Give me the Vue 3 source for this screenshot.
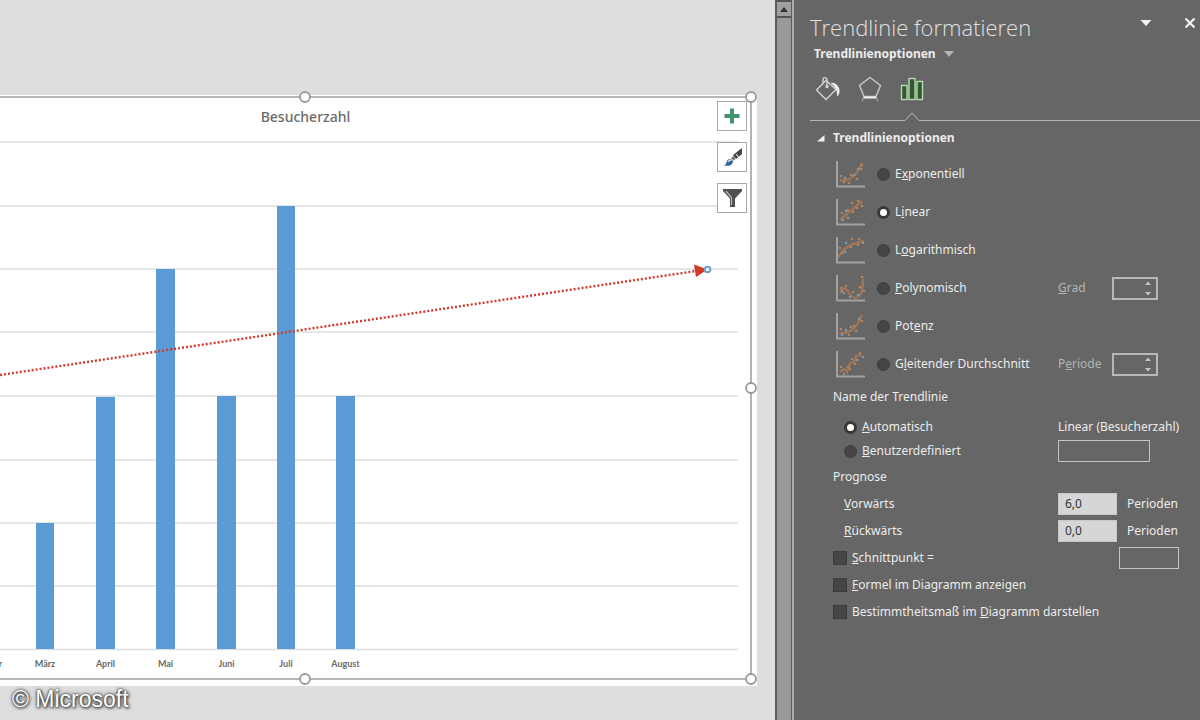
<script setup>
import { ref } from 'vue'

const gridLines = [142, 206, 269, 332, 396, 460, 523, 586]
const bars = [
  { x: 36, y: 523, w: 18, label: 'März' },
  { x: 96, y: 397, w: 19, label: 'April' },
  { x: 156, y: 269, w: 19, label: 'Mai' },
  { x: 217, y: 396, w: 19, label: 'Juni' },
  { x: 277, y: 206, w: 18, label: 'Juli' },
  { x: 336, y: 396, w: 19, label: 'August' },
]
const handles = [[305, 97], [751, 97], [751, 388], [305, 679], [751, 679]]

const types = [
  {
    id: 'exp', pre: 'E', key: 'x', post: 'ponentiell',
    curve: 'M4 20 C14 22 20 16 26 3',
    dots: [[5, 16], [9, 18], [15, 15], [21, 19], [22, 9], [26, 5], [13, 23], [18, 15], [8, 22], [25, 9]],
  },
  {
    id: 'lin', pre: 'L', key: 'i', post: 'near',
    curve: 'M4 22 L26 3',
    dots: [[6, 15], [10, 13], [16, 5], [22, 3], [12, 20], [17, 14], [26, 8], [7, 22], [21, 10], [12, 12]],
  },
  {
    id: 'log', pre: 'L', key: 'o', post: 'garithmisch',
    curve: 'M2 22 C7 12 14 8 28 5',
    dots: [[4, 12], [10, 7], [16, 3], [23, 3], [9, 16], [15, 11], [22, 9], [27, 7], [6, 17]],
  },
  {
    id: 'poly', pre: '', key: 'P', post: 'olynomisch', extra: { pre: '', key: 'G', post: 'rad' },
    curve: 'M4 19 C7 12 10 14 13 19 C18 27 27 27 27 5',
    dots: [[5, 14], [8, 19], [10, 12], [17, 18], [22, 21], [24, 13], [26, 3], [14, 23], [28, 17], [6, 17]],
  },
  {
    id: 'pot', pre: 'Pot', key: 'e', post: 'nz',
    curve: 'M3 21 C14 22 20 17 26 3',
    dots: [[5, 17], [10, 18], [15, 15], [20, 19], [23, 7], [26, 9], [13, 23], [6, 23], [18, 14]],
  },
  {
    id: 'avg', pre: 'G', key: 'l', post: 'eitender Durchschnitt', extra: { pre: 'P', key: 'e', post: 'riode' },
    curve: 'M4 22 L8 19 L11 22 L14 13 L18 12 L20 6 L26 5',
    dots: [[5, 17], [8, 24], [12, 17], [16, 9], [21, 10], [24, 3], [14, 19], [27, 7], [19, 14]],
  },
]
const selected = ref('lin')
const naming = ref('auto')
const periods = ref([
  { id: 'fwd', key: 'V', post: 'orwärts', value: '6,0' },
  { id: 'back', key: 'R', post: 'ückwärts', value: '0,0' },
])
</script>

<template>
  <div class="app">
    <main class="canvas">
      <section class="chart">
        <svg class="plot" viewBox="0 95 757 591" role="img" aria-label="Besucherzahl">
          <g stroke="#dedede" stroke-width="1.3">
            <line v-for="y in gridLines" :key="y" x1="0" :y1="y" x2="738" :y2="y" />
            <line x1="0" y1="649.5" x2="738" y2="649.5" />
          </g>
          <text class="chart-title" x="305.5" y="122" text-anchor="middle">Besucherzahl</text>
          <g v-for="b in bars" :key="b.label">
            <rect :x="b.x" :y="b.y" :width="b.w" :height="649 - b.y" fill="#5b9bd5" />
            <text class="month" :x="b.x + b.w / 2" y="667" text-anchor="middle">{{ b.label }}</text>
          </g>
          <text class="month" x="2" y="667" text-anchor="end">Februar</text>
          <line x1="0" y1="375" x2="696" y2="271" stroke="#d2392c" stroke-width="2.4" stroke-dasharray="2 2" />
          <path d="M694 264.500 L707.500 269.500 L696 277 Z" fill="#d03a20" />
          <circle cx="707.500" cy="269.500" r="2.800" fill="#fff" stroke="#6c9ccb" stroke-width="2" />
          <path d="M0 97 H751 V679 H0" fill="none" stroke="#a0a0a0" stroke-width="1.600" />
          <circle v-for="(h, i) in handles" :key="i" :cx="h[0]" :cy="h[1]" r="5" fill="#fff" stroke="#9a9a9a" stroke-width="1.800" />
        </svg>
        <div class="tools">
          <button type="button" aria-label="Diagrammelemente">
            <svg width="28" height="28" viewBox="0 0 28 28"><path d="M12 6.500h4v5.500h5.500v4H16v5.500h-4V16H6.500v-4H12z" fill="#44936f" /></svg>
          </button>
          <button type="button" aria-label="Diagrammformatvorlagen">
            <svg width="28" height="28" viewBox="0 0 28 28">
              <path d="M24 5v6l-6 5-3-4z" fill="#444" />
              <path d="M18 11l2.500 3" stroke="#fff" />
              <path d="M15.500 13l2 3-2 1.500-2.500-2.500z" fill="#777" />
              <path d="M6 22.500c3-1 2-4 4-6 2-1.500 5 0 5 2.500-1 3.500-5 4.500-9 3.500z" fill="#2f6497" />
              <path d="M10 19c1-2 2.500-2 3.500-1.500" fill="none" stroke="#c7dcf0" stroke-width="1.500" />
            </svg>
          </button>
          <button type="button" aria-label="Diagrammfilter">
            <svg width="28" height="28" viewBox="0 0 28 28">
              <path d="M5 5h19v2l-7 7.500V23h-5v-8.500L5 7z" fill="#505050" />
              <path d="M8 7l5.500 6.500V21" fill="none" stroke="#bbb" stroke-width="1.200" />
            </svg>
          </button>
        </div>
      </section>
      <p class="credit">© Microsoft</p>
    </main>

    <div class="scrollbar">
      <button type="button" aria-label="Nach oben">
        <svg width="8" height="5" viewBox="0 0 8 5"><path d="M4 0l4 5H0z" fill="#333" /></svg>
      </button>
    </div>

    <aside class="pane">
      <header class="pane-head">
        <h1>Trendlinie formatieren</h1>
        <button type="button" class="plain" aria-label="Bereichsoptionen">
          <svg width="12" height="6" viewBox="0 0 12 6"><path d="M0.500 0h11L6 6z" fill="#f2f2f2" /></svg>
        </button>
        <button type="button" class="plain close" aria-label="Schließen">
          <svg width="12" height="12" viewBox="0 0 12 12"><path d="M1.500 1.500l9 9M10.500 1.500l-9 9" stroke="#f2f2f2" stroke-width="2.200" /></svg>
        </button>
      </header>
      <button type="button" class="plain scope">
        Trendlinienoptionen
        <svg width="10" height="6" viewBox="0 0 10 6"><path d="M0 0h10L5 6z" fill="#b4b4b4" /></svg>
      </button>
      <nav class="tabs">
        <button type="button" class="plain" aria-label="Füllung und Linie">
          <svg width="26" height="26" viewBox="0 0 26 26" fill="none" stroke="#d2d2d2" stroke-width="1.400">
            <path d="M11 4.500L21 13.500 11 23.500 1.500 14z" />
            <path d="M8 8V3.500c0-2.500 4-2.500 4 0V10" />
            <circle cx="12" cy="10.500" r="1" fill="#d2d2d2" />
            <path d="M15.500 6.500c6 0 10 5 9 10-.5 2-1.500 3.500-2.500 4 .5-6-1.500-9-6.500-14z" fill="#ececec" stroke="none" />
          </svg>
        </button>
        <button type="button" class="plain" aria-label="Effekte">
          <svg width="26" height="26" viewBox="0 0 26 26" fill="none" stroke="#c4c4c4" stroke-width="1.500">
            <path d="M13 1.500L23.500 9.500 19 20.500H7L2.500 9.500z" />
            <path d="M6.500 21.500h13" stroke="#eee" stroke-width="2" />
            <path d="M6.500 22l-1.500 3.500M19.500 22l1.500 3.500" stroke="#999" />
          </svg>
        </button>
        <button type="button" class="plain" aria-label="Trendlinienoptionen">
          <svg width="26" height="26" viewBox="0 0 26 26" fill="#2f5a2b" stroke="#b9d8b3" stroke-width="1.400">
            <rect x="2.500" y="9.500" width="5.500" height="14" />
            <rect x="10" y="2.500" width="6" height="21" />
            <rect x="18" y="5.500" width="5.500" height="18" />
          </svg>
        </button>
      </nav>
      <div class="divider">
        <i class="lead"></i>
        <svg width="14" height="9" viewBox="0 0 14 9"><path d="M0 8.500L7 1l7 7.500" fill="none" stroke="#b5b5b5" /></svg>
        <i class="rest"></i>
      </div>

      <h2>
        <svg width="8" height="7" viewBox="0 0 8 7"><path d="M7.500 0v6.500H0z" fill="#f2f2f2" /></svg>
        Trendlinienoptionen
      </h2>

      <div v-for="t in types" :key="t.id" class="type-row">
        <svg width="29" height="28" viewBox="0 0 29 28" fill="none">
          <path :d="t.curve" stroke="#a0765a" stroke-width="2.400" />
          <g v-for="(d, i) in t.dots" :key="i">
            <circle :cx="d[0]" :cy="d[1]" r="1.300" :fill="i % 3 === 1 ? '#8497a3' : '#b5835c'" />
          </g>
          <path d="M1 1v25.500h28" stroke="#a2a2a2" stroke-width="2" />
        </svg>
        <label class="choice">
          <input v-model="selected" type="radio" name="type" :value="t.id" />
          <span>{{ t.pre }}<u>{{ t.key }}</u>{{ t.post }}</span>
        </label>
        <template v-if="t.extra">
          <label class="dim" :for="t.id + '-n'">{{ t.extra.pre }}<u>{{ t.extra.key }}</u>{{ t.extra.post }}</label>
          <span class="spinner">
            <input :id="t.id + '-n'" type="text" disabled />
            <svg width="6" height="15" viewBox="0 0 6 15"><path d="M0 4L3 0.500 6 4zM0 11L3 14.500 6 11z" fill="#c4c4c4" /></svg>
          </span>
        </template>
      </div>

      <h3>Name der Trendlinie</h3>
      <div class="names">
        <div class="name-row">
          <label class="choice">
            <input v-model="naming" type="radio" name="naming" value="auto" />
            <span><u>A</u>utomatisch</span>
          </label>
          <span>Linear (Besucherzahl)</span>
        </div>
        <div class="name-row">
          <label class="choice">
            <input v-model="naming" type="radio" name="naming" value="custom" />
            <span><u>B</u>enutzerdefiniert</span>
          </label>
          <input class="outline" type="text" aria-label="Benutzerdefinierter Name" />
        </div>
      </div>

      <h3>Prognose</h3>
      <div v-for="p in periods" :key="p.id" class="period-row">
        <label :for="p.id"><u>{{ p.key }}</u>{{ p.post }}</label>
        <input :id="p.id" v-model="p.value" type="text" />
        <span>Perioden</span>
      </div>

      <div class="check-row">
        <label class="check"><input type="checkbox" /><span><u>S</u>chnittpunkt =</span></label>
        <input class="outline intercept" type="text" aria-label="Schnittpunkt" />
      </div>
      <div class="check-row">
        <label class="check"><input type="checkbox" /><span><u>F</u>ormel im Diagramm anzeigen</span></label>
      </div>
      <div class="check-row">
        <label class="check"><input type="checkbox" /><span>Bestimmtheitsmaß im <u>D</u>iagramm darstellen</span></label>
      </div>
    </aside>
  </div>
</template>

<style>
body {
  margin: 0;
  background: #dedede;
}
</style>

<style scoped>
* {
  box-sizing: border-box;
}
.app {
  display: flex;
  min-height: 100vh;
  font: 12px/18px "Noto Sans", "Open Sans", sans-serif;
  color: #ececec;
}
svg {
  display: block;
  flex: none;
}
button,
input {
  font: inherit;
  color: inherit;
  margin: 0;
}
button {
  display: flex;
  align-items: center;
  justify-content: center;
  padding: 0;
}
.plain {
  border: 0;
  background: none;
}
.canvas {
  flex: 1;
  min-width: 0;
  padding: 95px 18px 0 0;
  background: #dedede;
}
.chart {
  position: relative;
  background: #fff;
}
.plot {
  width: 100%;
  height: auto;
  overflow: visible;
}
.chart-title {
  font: 500 14px "Noto Sans", sans-serif;
  fill: #6a6a6a;
}
.month {
  font: bold 9px Lato, sans-serif;
  fill: #6a6a6a;
}
.tools {
  position: absolute;
  top: 6px;
  right: 10px;
  display: grid;
  gap: 11px;
}
.tools button {
  width: 30px;
  height: 30px;
  border: 1px solid #a8a8a8;
  background: #fff;
}
.credit {
  margin: 0 0 0 12px;
  font: 23px/26px "Liberation Sans", Arial, sans-serif;
  color: #fff;
  text-shadow: 0 0 2px #333, 1px 1px 3px #333, 0 0 4px #555;
}
.scrollbar {
  width: 17px;
  flex: none;
  background: #999;
  border: solid #5c5c5c;
  border-width: 0 1px 0 2px;
}
.scrollbar button {
  width: 100%;
  height: 18px;
  border: solid #555;
  border-width: 2px 0;
  background: #a0a0a0;
}
.pane {
  flex: none;
  width: 408px;
  background: #666;
  border-left: 2px solid #aaa;
}
.pane-head {
  display: flex;
  align-items: center;
  padding: 12px 4px 0 16px;
  height: 42px;
}
h1 {
  flex: 1;
  margin: 0;
  font: 300 22px/28px "Open Sans", "Noto Sans", sans-serif;
  color: #e0e0e0;
}
.pane-head .plain {
  height: 22px;
  align-self: flex-start;
}
.close {
  margin-left: 32px;
}
.scope {
  gap: 8px;
  margin-left: 20px;
  height: 23px;
  font-weight: bold;
}
.tabs {
  display: flex;
  gap: 16px;
  padding: 11px 0 0 21px;
}
.divider {
  display: flex;
  align-items: flex-end;
  margin: 10px 0 0 16px;
}
.divider i {
  height: 1px;
  background: #b5b5b5;
}
.lead {
  width: 95px;
}
.rest {
  flex: 1;
}
h2 {
  display: flex;
  align-items: center;
  gap: 8px;
  margin: 0;
  padding-left: 23px;
  height: 34px;
  font: bold 12px/18px "Noto Sans", sans-serif;
}
.type-row {
  display: grid;
  grid-template-columns: 41px 181px 54px 46px;
  align-items: center;
  height: 38px;
  padding-left: 42px;
}
.choice,
.check {
  display: flex;
  align-items: center;
  gap: 5px;
  white-space: nowrap;
}
.dim {
  color: #b4b4b4;
}
input[type="radio"],
input[type="checkbox"] {
  appearance: none;
  width: 13px;
  height: 13px;
  background: #454545;
  border: 1px solid #3c3c3c;
  border-radius: 50%;
}
input[type="radio"]:checked {
  background: #fff;
  border: 3px solid #383838;
}
input[type="checkbox"] {
  width: 14px;
  height: 14px;
  border-radius: 0;
}
.spinner {
  display: flex;
  align-items: center;
  height: 23px;
  padding-right: 5px;
  border: 2px solid #b8b8b8;
}
.spinner input {
  flex: 1;
  min-width: 0;
  width: 0;
  height: 16px;
  padding: 0;
  border: 0;
  background: none;
}
h3 {
  margin: 0;
  padding-left: 39px;
  font: 12px/27px "Noto Sans", sans-serif;
}
.names {
  padding-top: 5px;
}
.name-row {
  display: grid;
  grid-template-columns: 214px 1fr;
  align-items: center;
  height: 24px;
  padding-left: 50px;
}
.outline {
  width: 92px;
  height: 22px;
  padding: 0 4px;
  border: 1px solid #c4c4c4;
  background: none;
}
.period-row {
  display: grid;
  grid-template-columns: 214px 59px 1fr;
  align-items: center;
  height: 27px;
  padding-left: 50px;
}
.period-row input {
  height: 22px;
  padding: 0 6px;
  border: 1px solid #c8c8c8;
  background: #d6d6d6;
  color: #333;
}
.period-row span {
  padding-left: 10px;
}
.check-row {
  display: flex;
  align-items: center;
  justify-content: space-between;
  height: 27px;
  padding: 0 21px 0 39px;
}
.intercept {
  width: 60px;
}
</style>
